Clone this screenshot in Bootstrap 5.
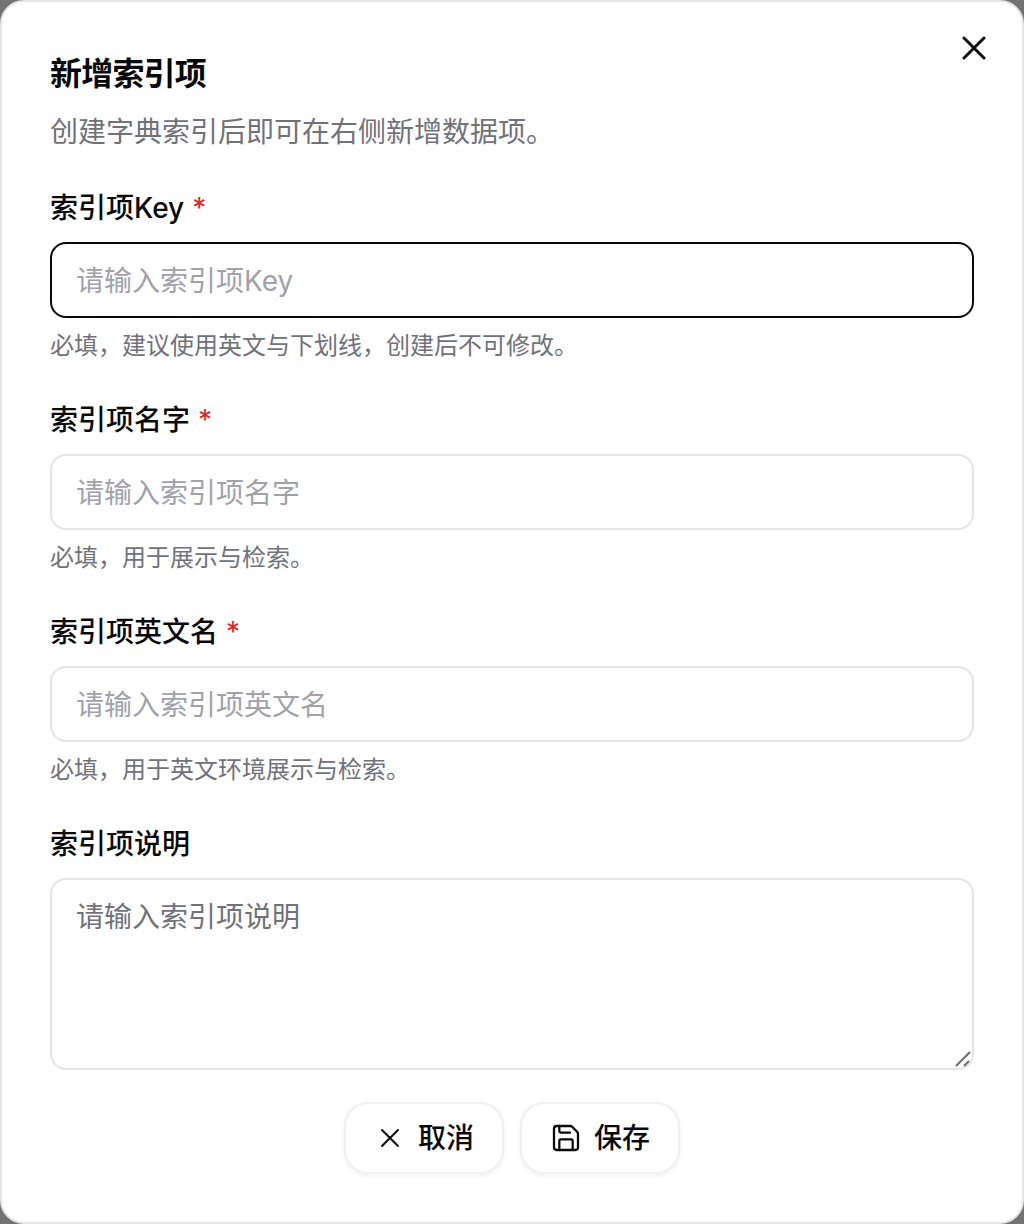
<!DOCTYPE html>
<html lang="zh-CN">
<head>
<meta charset="utf-8">
<title>新增索引项</title>
<link rel="stylesheet" href="https://cdn.jsdelivr.net/npm/bootstrap@5.3.0/dist/css/bootstrap.min.css">
<style>
html,body{height:100%;margin:0}
body{background:#737373;font-family:Inter,"Noto Sans CJK SC",sans-serif;color:#09090b}
.dlg-shell{width:1024px;height:1224px;background:#fff;border:2px solid #e4e4e7;border-radius:24px;padding:38px 48px 0;position:relative}
.dlg-title{font-size:32px;line-height:48px;font-weight:600;letter-spacing:-.8px;margin:10px 0 0;color:#09090b;height:48px}
.dlg-desc{font-size:28px;line-height:40px;color:#71717a;margin:14px 0 0}
.dlg-close{position:absolute;top:34px;right:36px;width:24px;height:24px;padding:0;border:0;background:none;display:flex}
.fld{height:212px}
.fld-first{margin-top:36px}
.fld-label{font-size:28px;line-height:40px;font-weight:500;color:#09090b;margin:0 0 14px;display:block}
.req{color:#dc2626;margin-left:8px;font-weight:400}
.fld-input.form-control{height:76px;border:2px solid #e4e4e7;border-radius:16px;padding:2px 24px 0;font-size:28px;line-height:40px;color:#09090b;box-shadow:none;font-family:inherit}
.fld-input.form-control::placeholder{color:#a1a1aa}
.fld-active.form-control{border-color:#09090b}
.fld-area.form-control{height:192px;padding:17px 24px;resize:none}
.fld-area.form-control::placeholder{color:#71717a}
.fld-help{font-size:24px;line-height:32px;color:#71717a;margin:12px 0 0}
.area-wrap{position:relative}
.grip{position:absolute;right:2px;bottom:2px;width:18px;height:18px;pointer-events:none}
.dlg-actions{margin-top:32px}
.act-btn.btn{width:160px;height:72px;background:#fff;border:2px solid #f0f0f1;border-radius:24px;box-shadow:0 2px 4px rgba(0,0,0,.05);font-size:28px;font-weight:500;color:#09090b;padding:0;display:flex;align-items:center;justify-content:center;gap:12px}
.act-btn svg{flex:none}
</style>
</head>
<body>
<div class="dlg-shell">
  <button type="button" class="dlg-close" aria-label="关闭">
    <svg width="24" height="24" viewBox="0 0 24 24" fill="none" stroke="#09090b" stroke-width="3" stroke-linecap="round"><path d="M2 2 22 22M22 2 2 22"/></svg>
  </button>
  <h2 class="dlg-title">新增索引项</h2>
  <p class="dlg-desc">创建字典索引后即可在右侧新增数据项。</p>
  <form>
    <div class="fld fld-first">
      <label class="fld-label">索引项Key<span class="req">*</span></label>
      <input class="form-control fld-input fld-active" placeholder="请输入索引项Key">
      <p class="fld-help">必填&#65292;建议使用英文与下划线&#65292;创建后不可修改。</p>
    </div>
    <div class="fld">
      <label class="fld-label">索引项名字<span class="req">*</span></label>
      <input class="form-control fld-input" placeholder="请输入索引项名字">
      <p class="fld-help">必填&#65292;用于展示与检索。</p>
    </div>
    <div class="fld">
      <label class="fld-label">索引项英文名<span class="req">*</span></label>
      <input class="form-control fld-input" placeholder="请输入索引项英文名">
      <p class="fld-help">必填&#65292;用于英文环境展示与检索。</p>
    </div>
    <div>
      <label class="fld-label">索引项说明</label>
      <div class="area-wrap">
        <textarea class="form-control fld-input fld-area" placeholder="请输入索引项说明"></textarea>
        <svg class="grip" viewBox="0 0 18 18" fill="none" stroke="#6b6b6b" stroke-width="2"><path d="M2 16 16 2M10 16 15 11"/></svg>
      </div>
    </div>
    <div class="dlg-actions d-flex justify-content-center gap-3">
      <button type="button" class="btn act-btn">
        <svg width="32" height="32" viewBox="0 0 24 24" fill="none" stroke="#09090b" stroke-width="1.5" stroke-linecap="round"><path d="M18 6 6 18M6 6l12 12"/></svg>取消
      </button>
      <button type="button" class="btn act-btn">
        <svg width="32" height="32" viewBox="0 0 24 24" fill="none" stroke="#09090b" stroke-width="1.7" stroke-linecap="round" stroke-linejoin="round"><path d="M15.2 3a2 2 0 0 1 1.4.6l3.8 3.8a2 2 0 0 1 .6 1.4V19a2 2 0 0 1-2 2H5a2 2 0 0 1-2-2V5a2 2 0 0 1 2-2z"/><path d="M17 21v-7a1 1 0 0 0-1-1H8a1 1 0 0 0-1 1v7"/><path d="M7 3v4a1 1 0 0 0 1 1h7"/></svg>保存
      </button>
    </div>
  </form>
</div>
</body>
</html>
